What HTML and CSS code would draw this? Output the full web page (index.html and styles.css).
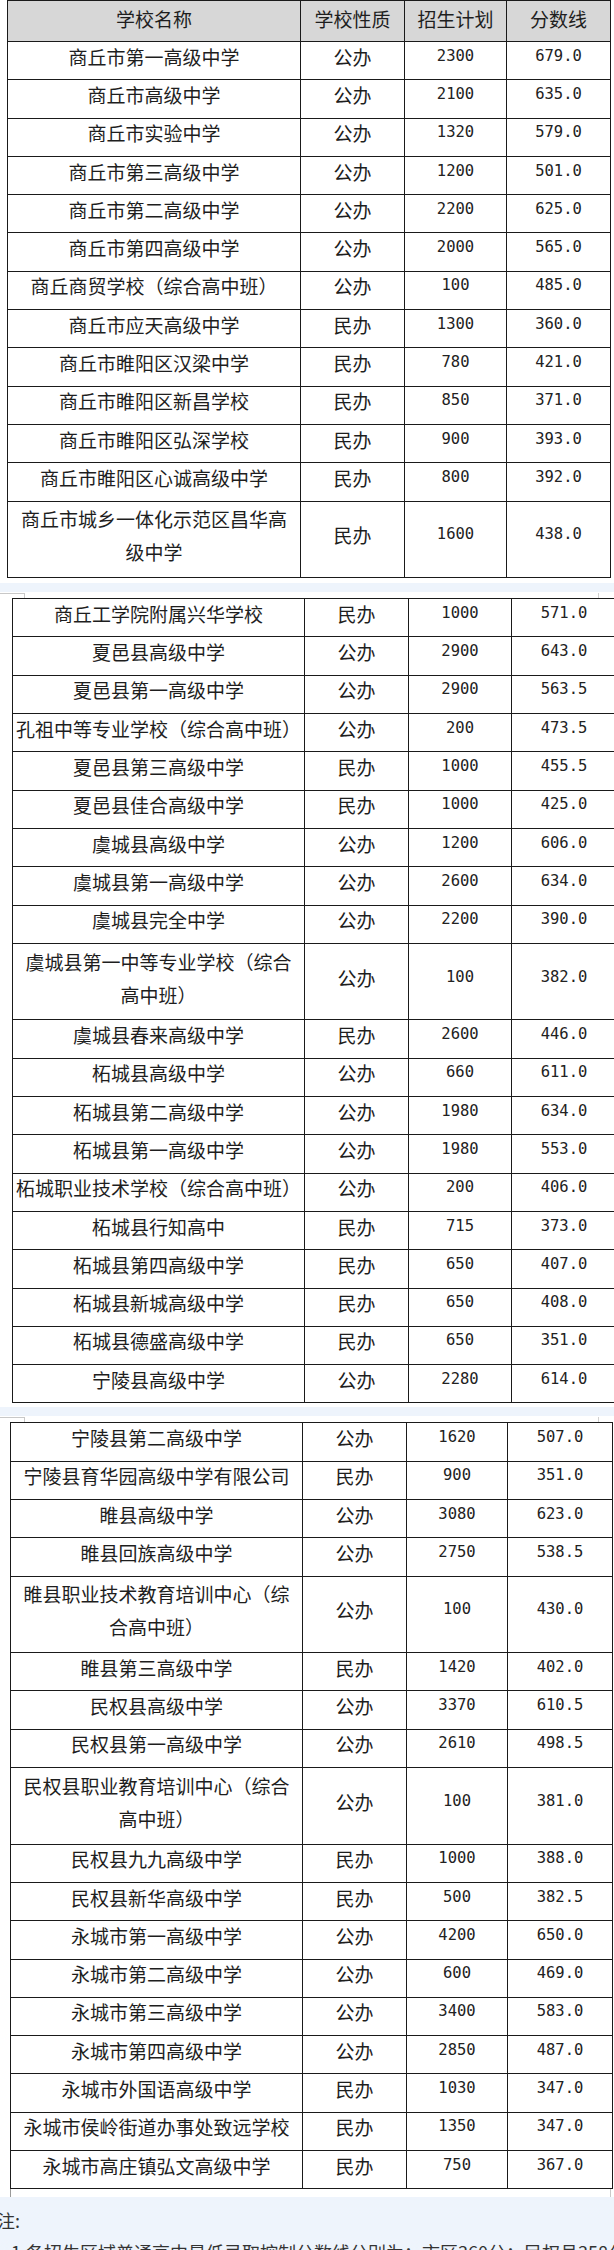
FILE: index.html
```html
<!DOCTYPE html>
<html lang="zh-CN">
<head>
<meta charset="utf-8">
<title>商丘市普通高中招生计划及分数线</title>
<link rel="stylesheet" href="styles.css">
</head>
<body>
<table class="sheet t1">
  <colgroup><col class="c1"><col class="c2"><col class="c3"><col class="c4"></colgroup>
  <tr class="head"><th>学校名称</th><th>学校性质</th><th>招生计划</th><th>分数线</th></tr>
  <tr><td>商丘市第一高级中学</td><td>公办</td><td class="num">2300</td><td class="num">679.0</td></tr>
  <tr><td>商丘市高级中学</td><td>公办</td><td class="num">2100</td><td class="num">635.0</td></tr>
  <tr><td>商丘市实验中学</td><td>公办</td><td class="num">1320</td><td class="num">579.0</td></tr>
  <tr><td>商丘市第三高级中学</td><td>公办</td><td class="num">1200</td><td class="num">501.0</td></tr>
  <tr><td>商丘市第二高级中学</td><td>公办</td><td class="num">2200</td><td class="num">625.0</td></tr>
  <tr><td>商丘市第四高级中学</td><td>公办</td><td class="num">2000</td><td class="num">565.0</td></tr>
  <tr><td>商丘商贸学校（综合高中班）</td><td>公办</td><td class="num">100</td><td class="num">485.0</td></tr>
  <tr><td>商丘市应天高级中学</td><td>民办</td><td class="num">1300</td><td class="num">360.0</td></tr>
  <tr><td>商丘市睢阳区汉梁中学</td><td>民办</td><td class="num">780</td><td class="num">421.0</td></tr>
  <tr><td>商丘市睢阳区新昌学校</td><td>民办</td><td class="num">850</td><td class="num">371.0</td></tr>
  <tr><td>商丘市睢阳区弘深学校</td><td>民办</td><td class="num">900</td><td class="num">393.0</td></tr>
  <tr><td>商丘市睢阳区心诚高级中学</td><td>民办</td><td class="num">800</td><td class="num">392.0</td></tr>
  <tr class="dbl"><td class="two">商丘市城乡一体化示范区昌华高<br>级中学</td><td>民办</td><td class="num">1600</td><td class="num">438.0</td></tr>
</table>

<div class="gap">
  <div class="band"></div>
  <div class="marks"><span class="corner"></span><span class="tick"></span></div>
</div>

<table class="sheet t2">
  <colgroup><col class="c1"><col class="c2"><col class="c3"><col class="c4"></colgroup>
  <tr><td>商丘工学院附属兴华学校</td><td>民办</td><td class="num">1000</td><td class="num">571.0</td></tr>
  <tr><td>夏邑县高级中学</td><td>公办</td><td class="num">2900</td><td class="num">643.0</td></tr>
  <tr><td>夏邑县第一高级中学</td><td>公办</td><td class="num">2900</td><td class="num">563.5</td></tr>
  <tr><td>孔祖中等专业学校（综合高中班）</td><td>公办</td><td class="num">200</td><td class="num">473.5</td></tr>
  <tr><td>夏邑县第三高级中学</td><td>民办</td><td class="num">1000</td><td class="num">455.5</td></tr>
  <tr><td>夏邑县佳合高级中学</td><td>民办</td><td class="num">1000</td><td class="num">425.0</td></tr>
  <tr><td>虞城县高级中学</td><td>公办</td><td class="num">1200</td><td class="num">606.0</td></tr>
  <tr><td>虞城县第一高级中学</td><td>公办</td><td class="num">2600</td><td class="num">634.0</td></tr>
  <tr><td>虞城县完全中学</td><td>公办</td><td class="num">2200</td><td class="num">390.0</td></tr>
  <tr class="dbl"><td class="two">虞城县第一中等专业学校（综合<br>高中班）</td><td>公办</td><td class="num">100</td><td class="num">382.0</td></tr>
  <tr><td>虞城县春来高级中学</td><td>民办</td><td class="num">2600</td><td class="num">446.0</td></tr>
  <tr><td>柘城县高级中学</td><td>公办</td><td class="num">660</td><td class="num">611.0</td></tr>
  <tr><td>柘城县第二高级中学</td><td>公办</td><td class="num">1980</td><td class="num">634.0</td></tr>
  <tr><td>柘城县第一高级中学</td><td>公办</td><td class="num">1980</td><td class="num">553.0</td></tr>
  <tr><td>柘城职业技术学校（综合高中班）</td><td>公办</td><td class="num">200</td><td class="num">406.0</td></tr>
  <tr><td>柘城县行知高中</td><td>民办</td><td class="num">715</td><td class="num">373.0</td></tr>
  <tr><td>柘城县第四高级中学</td><td>民办</td><td class="num">650</td><td class="num">407.0</td></tr>
  <tr><td>柘城县新城高级中学</td><td>民办</td><td class="num">650</td><td class="num">408.0</td></tr>
  <tr><td>柘城县德盛高级中学</td><td>民办</td><td class="num">650</td><td class="num">351.0</td></tr>
  <tr><td>宁陵县高级中学</td><td>公办</td><td class="num">2280</td><td class="num">614.0</td></tr>
</table>

<div class="gap gap2">
  <div class="band"></div>
  <div class="marks"><span class="corner"></span><span class="tick"></span></div>
</div>

<table class="sheet t3">
  <colgroup><col class="c1"><col class="c2"><col class="c3"><col class="c4"></colgroup>
  <tr><td>宁陵县第二高级中学</td><td>公办</td><td class="num">1620</td><td class="num">507.0</td></tr>
  <tr><td>宁陵县育华园高级中学有限公司</td><td>民办</td><td class="num">900</td><td class="num">351.0</td></tr>
  <tr><td>睢县高级中学</td><td>公办</td><td class="num">3080</td><td class="num">623.0</td></tr>
  <tr><td>睢县回族高级中学</td><td>公办</td><td class="num">2750</td><td class="num">538.5</td></tr>
  <tr class="dbl"><td class="two">睢县职业技术教育培训中心（综<br>合高中班）</td><td>公办</td><td class="num">100</td><td class="num">430.0</td></tr>
  <tr><td>睢县第三高级中学</td><td>民办</td><td class="num">1420</td><td class="num">402.0</td></tr>
  <tr><td>民权县高级中学</td><td>公办</td><td class="num">3370</td><td class="num">610.5</td></tr>
  <tr><td>民权县第一高级中学</td><td>公办</td><td class="num">2610</td><td class="num">498.5</td></tr>
  <tr class="dbl"><td class="two">民权县职业教育培训中心（综合<br>高中班）</td><td>公办</td><td class="num">100</td><td class="num">381.0</td></tr>
  <tr><td>民权县九九高级中学</td><td>民办</td><td class="num">1000</td><td class="num">388.0</td></tr>
  <tr><td>民权县新华高级中学</td><td>民办</td><td class="num">500</td><td class="num">382.5</td></tr>
  <tr><td>永城市第一高级中学</td><td>公办</td><td class="num">4200</td><td class="num">650.0</td></tr>
  <tr><td>永城市第二高级中学</td><td>公办</td><td class="num">600</td><td class="num">469.0</td></tr>
  <tr><td>永城市第三高级中学</td><td>公办</td><td class="num">3400</td><td class="num">583.0</td></tr>
  <tr><td>永城市第四高级中学</td><td>公办</td><td class="num">2850</td><td class="num">487.0</td></tr>
  <tr><td>永城市外国语高级中学</td><td>民办</td><td class="num">1030</td><td class="num">347.0</td></tr>
  <tr><td>永城市侯岭街道办事处致远学校</td><td>民办</td><td class="num">1350</td><td class="num">347.0</td></tr>
  <tr><td>永城市高庄镇弘文高级中学</td><td>民办</td><td class="num">750</td><td class="num">367.0</td></tr>
</table>

<div class="tail"></div>

<div class="note">
  <div class="l1">注:</div>
  <div class="l2">1.各招生区域普通高中最低录取控制分数线分别为：市区360分；民权县358分；</div>
</div>
</body>
</html>
```

FILE: styles.css
```css
html, body {
  margin: 0;
  padding: 0;
  background: #ffffff;
  overflow: hidden;
}

body {
  width: 614px;
  font-family: "Noto Sans CJK SC", "Noto Sans", sans-serif;
  color: #1e1e1e;
}

.sheet {
  border-collapse: collapse;
  table-layout: fixed;
}

.sheet td,
.sheet th {
  border: 1px solid #1a1a1a;
  padding: 0 1px 9px;
  text-align: center;
  vertical-align: middle;
  line-height: 27px;
  font-size: 19px;
  color: #1e1e1e;
  white-space: nowrap;
  overflow: hidden;
}

.sheet tr {
  height: 38.3px;
}

.sheet tr.dbl {
  height: 76.6px;
}

.sheet tr.head {
  height: 41px;
}

.sheet th {
  background: #d7d7d7;
  font-weight: normal;
  padding-bottom: 6px;
}

.sheet td.num {
  font-family: "DejaVu Sans Mono", "Liberation Mono", monospace;
  font-size: 15.5px;
  color: #222222;
}

.sheet td.two {
  line-height: 33px;
  padding-bottom: 8px;
  white-space: nowrap;
}

/* table 1 */
.t1 {
  margin-left: 7px;
  width: 604px;
}
.t1 .c1 { width: 293px; }
.t1 .c2 { width: 104px; }
.t1 .c3 { width: 102px; }
.t1 .c4 { width: 104px; }

/* table 2 */
.t2 {
  margin-left: 12px;
  width: 605px;
}
.t2 .c1 { width: 292px; }
.t2 .c2 { width: 104px; }
.t2 .c3 { width: 103px; }
.t2 .c4 { width: 105px; }

/* table 3 */
.t3 {
  margin-left: 10px;
  width: 603px;
}
.t3 .c1 { width: 292px; }
.t3 .c2 { width: 104px; }
.t3 .c3 { width: 101px; }
.t3 .c4 { width: 105px; }

/* gap between image slices */
.gap {
  padding-top: 5px;
}

.gap2 {
  padding-top: 4px;
}

.band {
  height: 9px;
  background: #eef4fc;
}

.marks {
  height: 6px;
  display: flex;
  align-items: flex-start;
}

.marks .corner {
  width: 25px;
  height: 5px;
  margin-top: 1px;
  border-top: 1px solid #c8c8c8;
  border-right: 1px solid #c8c8c8;
  box-sizing: border-box;
}

.marks .tick {
  width: 1px;
  height: 5px;
  margin-left: 573px;
  margin-top: 1px;
  background: #d0d0d0;
}

.tail {
  height: 8px;
  margin-left: 10px;
  width: 601px;
  border-left: 1px solid #9a9a9a;
  border-right: 1px solid #c9c9c9;
  box-sizing: border-box;
}

.note {
  background: #eef4fc;
  padding-top: 7px;
  height: 80px;
  font-size: 18px;
  line-height: 32px;
  color: #333333;
  white-space: nowrap;
}

.note .l1 {
  margin-left: -3px;
}

.note .l2 {
  padding-left: 11px;
}
```
